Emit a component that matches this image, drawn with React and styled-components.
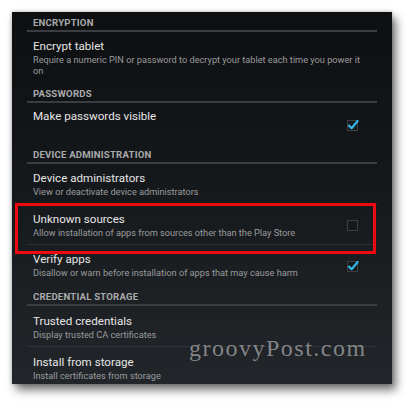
import React from 'react'
import styled, { createGlobalStyle } from 'styled-components'

const Global = createGlobalStyle`
  html, body {
    margin: 0;
    padding: 0;
    background: #ffffff;
  }
  body {
    font-family: Roboto, "Noto Sans", sans-serif;
  }
`

const Page = styled.div`
  width: 412px;
  height: 405px;
  padding: 12px;
  box-sizing: border-box;
`

const Panel = styled.div`
  position: relative;
  width: 380px;
  height: 372px;
  overflow: hidden;
  background: linear-gradient(180deg, #0d0f11 0%, #15181b 45%, #22262a 100%);
  box-shadow: 4px 6px 9px rgba(0, 0, 0, 0.55), 0 0 4px rgba(0, 0, 0, 0.25);
  padding: 0 15px;
  box-sizing: border-box;
`

const List = styled.div`
  display: flex;
  flex-direction: column;
`

const Header = styled.div`
  padding: 5px 0 1px 6px;
  line-height: 12px;
  font-size: 9.6px;
  font-weight: 700;
  color: #a9aaab;
  letter-spacing: 0.2px;
  border-bottom: 2px solid #3a3d41;
`

const Item = styled.div`
  position: relative;
  display: flex;
  align-items: center;
  min-height: ${p => (p.$minHeight ? p.$minHeight + 'px' : 'auto')};
  padding: 0 10px 0 6px;
  border-bottom: ${p => (p.$divider ? '1px solid #2e3236' : 'none')};
`

const Texts = styled.div`
  flex: 1;
  align-self: flex-start;
  padding: ${p => (p.$top ? p.$top : 7)}px 0 ${p => (p.$divider ? '6px' : '7px')};
`

const Title = styled.div`
  font-size: 11.6px;
  line-height: 14px;
  color: #e6e6e6;
`

const Summary = styled.div`
  margin-top: 2px;
  font-size: 9.2px;
  line-height: 10.5px;
  color: #9a9b9d;
`

const Box = styled.div`
  flex: none;
  width: 14px;
  height: 14px;
  margin: 0 7px 0 12px;
`

const Highlight = styled.div`
  position: absolute;
  top: -2px;
  left: -12px;
  right: 1px;
  height: 51px;
  border: 3px solid #ee0a0e;
  box-sizing: border-box;
  pointer-events: none;
`

const Watermark = styled.div`
  position: absolute;
  left: 177px;
  top: 324px;
  font-family: "Liberation Serif", "DejaVu Serif", serif;
  font-size: 24px;
  line-height: 24px;
  letter-spacing: 1.5px;
  color: rgba(150, 152, 155, 0.85);
  pointer-events: none;
`

const CheckBox = ({ checked }) => (
  <Box>
    <svg width="14" height="14" viewBox="0 0 14 14">
      <rect x="1.5" y="2.5" width="10" height="10" fill="#16191c" stroke="#3b3f43" strokeWidth="1" />
      {checked && (
        <path d="M3 7.6 L5.6 10.2 L11.6 3" fill="none" stroke="#33b5e5" strokeWidth="2.2" strokeLinecap="round" strokeLinejoin="round" />
      )}
    </svg>
  </Box>
)

const Setting = ({ title, summary, check, divider, minHeight, top, children }) => (
  <Item $divider={divider} $minHeight={minHeight}>
    <Texts $divider={divider} $top={top}>
      <Title>{title}</Title>
      {summary && <Summary>{summary}</Summary>}
    </Texts>
    {check !== undefined && <CheckBox checked={check} />}
    {children}
  </Item>
)

export default function App() {
  return (
    <Page>
      <Global />
      <Panel>
        <List>
          <Header>ENCRYPTION</Header>
          <Setting
            title="Encrypt tablet"
            summary="Require a numeric PIN or password to decrypt your tablet each time you power it on"
          />
          <Header>PASSWORDS</Header>
          <Setting title="Make passwords visible" check={true} minHeight={41} top={6} />
          <Header>DEVICE ADMINISTRATION</Header>
          <Setting
            title="Device administrators"
            summary="View or deactivate device administrators"
            divider
          />
          <Setting
            title="Unknown sources"
            summary="Allow installation of apps from sources other than the Play Store"
            check={false}
            divider
          >
            <Highlight />
          </Setting>
          <Setting
            title="Verify apps"
            summary="Disallow or warn before installation of apps that may cause harm"
            check={true}
          />
          <Header>CREDENTIAL STORAGE</Header>
          <Setting
            title="Trusted credentials"
            summary="Display trusted CA certificates"
            divider
            top={8}
          />
          <Setting
            title="Install from storage"
            summary="Install certificates from storage"
            top={8}
          />
        </List>
        <Watermark>groovyPost.com</Watermark>
      </Panel>
    </Page>
  )
}
